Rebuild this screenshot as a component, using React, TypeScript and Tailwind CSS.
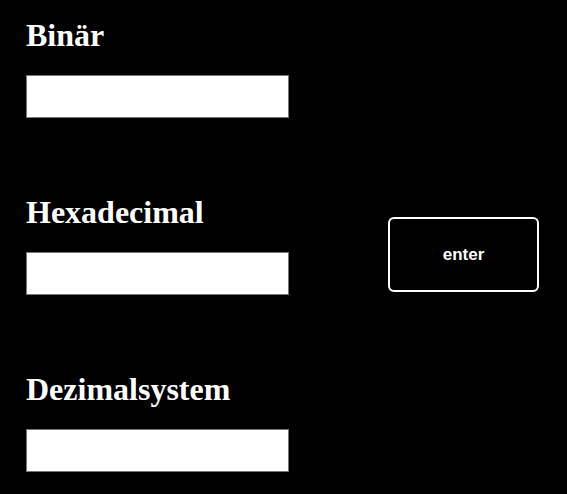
import React from "react";

const sections = ["Binär", "Hexadecimal", "Dezimalsystem"];

export default function App() {
  return (
    <div className="w-[567px] h-[494px] bg-black overflow-hidden flex items-start pl-[26px] pt-[17px]">
      <div className="flex flex-col gap-[76px] w-[263px]">
        {sections.map((s) => (
          <div key={s} className="flex flex-col">
            <h1
              className="text-white font-bold text-[32px] leading-[36px] m-0"
              style={{ fontFamily: '"Liberation Serif", "Times New Roman", serif' }}
            >
              {s}
            </h1>
            <input
              type="text"
              className="mt-[22px] w-[263px] h-[43px] bg-white border border-[#767676] outline-none"
            />
          </div>
        ))}
      </div>
      <button
        className="ml-[99px] mt-[200px] w-[151px] h-[75px] border-2 border-white rounded-[6px] bg-black text-white font-bold text-[17px]"
        style={{ fontFamily: '"Liberation Sans", Arial, sans-serif' }}
      >
        enter
      </button>
    </div>
  );
}
